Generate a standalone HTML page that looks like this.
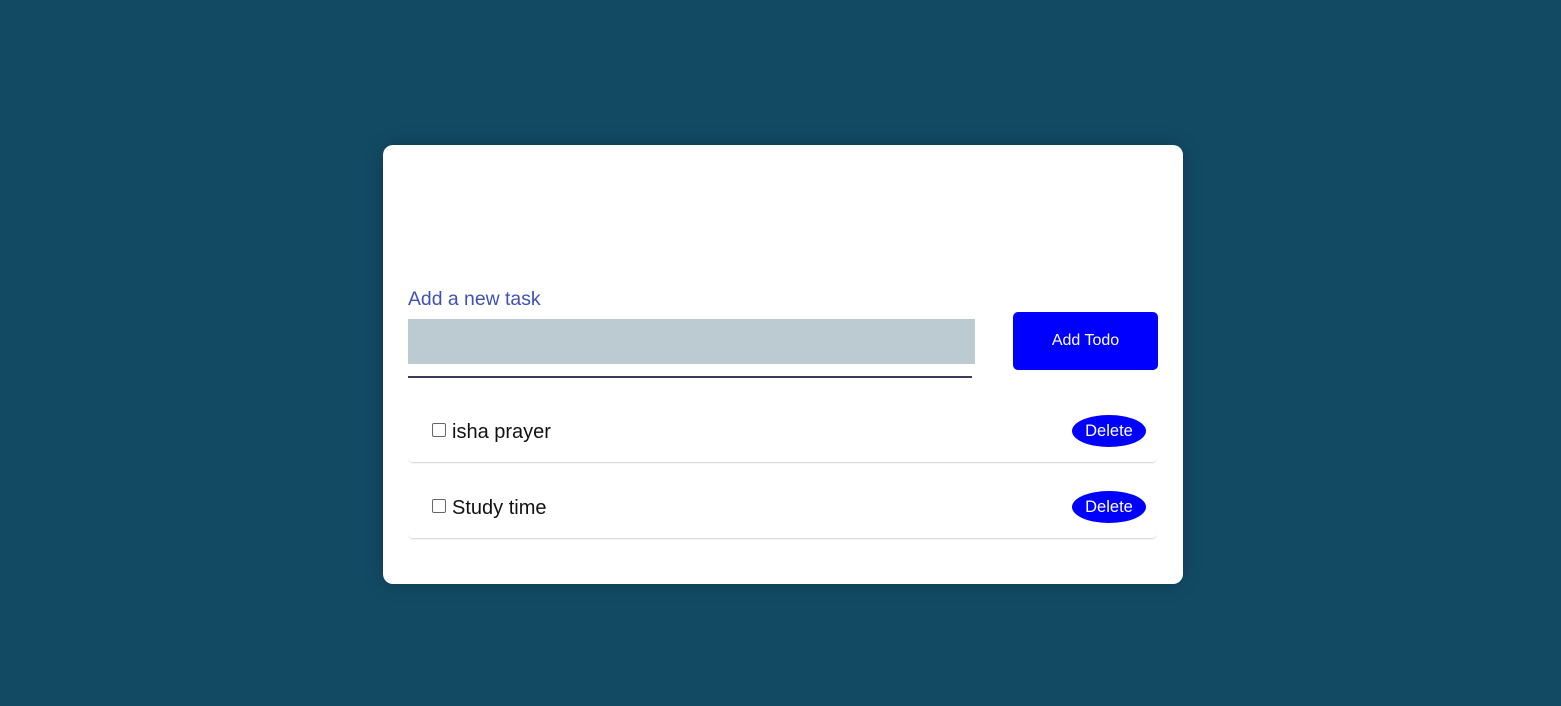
<!DOCTYPE html>
<html><head><style>
body{margin:0;width:1561px;height:706px;background:#124a64;font-family:"Liberation Sans",sans-serif;position:relative;overflow:hidden}
.card{position:absolute;left:383px;top:145px;width:800px;height:439px;background:#fff;border-radius:10px;box-shadow:0 0 20px rgba(0,0,0,.2)}
.lbl{position:absolute;left:25px;top:143px;font-size:19.4px;color:#3f51b5}
.inp{position:absolute;left:25px;top:174px;width:567px;height:45px;background:#bccbd2}
.line{position:absolute;left:25px;top:231px;width:564px;height:2px;background:#3a3a5a}
.btn{position:absolute;left:630px;top:167px;width:145px;height:58px;background:#0000ff;border-radius:5px;color:#fff;font-size:16px;text-align:center;line-height:58px}
.item{position:absolute;left:25px;width:749px;height:64px;border-bottom:1px solid #ddd;border-radius:0 0 5px 5px;box-shadow:0 1px 1px rgba(0,0,0,.05)}
.cb{position:absolute;left:24px;top:25px;width:12px;height:12px;border:1px solid #666;border-radius:2px}
.txt{position:absolute;left:44px;top:23px;font-size:20px;color:#111}
.del{position:absolute;left:664px;top:17px;width:74px;height:32px;border-radius:50%;background:#0000ff;color:#fff;font-size:16.5px;text-align:center;line-height:32px}
</style></head><body>
<div class="card">
<div class="lbl">Add a new task</div>
<div class="inp"></div>
<div class="line"></div>
<div class="btn">Add Todo</div>
<div class="item" style="top:253px"><div class="cb"></div><div class="txt">isha prayer</div><div class="del">Delete</div></div>
<div class="item" style="top:329px"><div class="cb"></div><div class="txt">Study time</div><div class="del">Delete</div></div>
</div>
</body></html>
